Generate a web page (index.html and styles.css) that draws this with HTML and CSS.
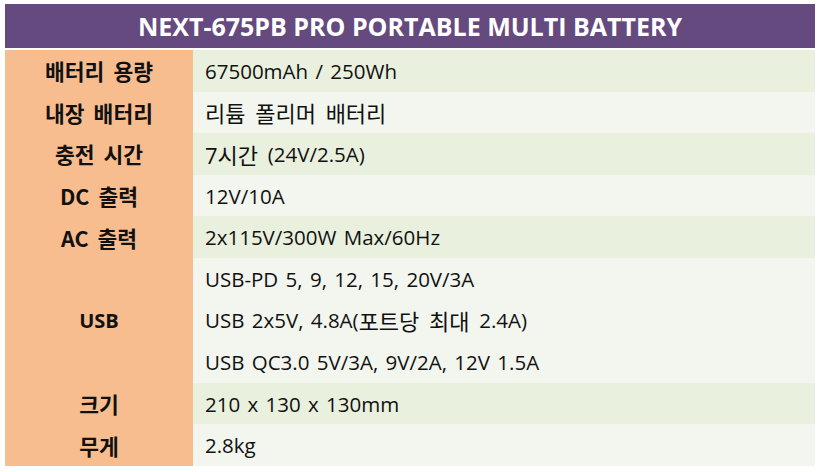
FILE: index.html
```html
<!DOCTYPE html>
<html lang="ko">
<head>
<meta charset="utf-8">
<link rel="stylesheet" href="styles.css">
</head>
<body>
<div class="sheet">
  <div class="title">NEXT-675PB PRO PORTABLE MULTI BATTERY</div>
  <div class="spec">
    <div class="label">배터리 용량</div><div class="val dark">67500mAh / 250Wh</div>
    <div class="label">내장 배터리</div><div class="val light"><span class="ko">리튬 폴리머 배터리</span></div>
    <div class="label">충전 시간</div><div class="val dark"><span class="ko">7시간 </span>(24V/2.5A)</div>
    <div class="label">DC 출력</div><div class="val light">12V/10A</div>
    <div class="label">AC 출력</div><div class="val dark">2x115V/300W Max/60Hz</div>
    <div class="label usb">USB</div>
    <div class="val light">USB-PD 5, 9, 12, 15, 20V/3A</div>
    <div class="val light">USB 2x5V, 4.8A(<span class="ko">포트당 최대 </span>2.4A)</div>
    <div class="val light">USB QC3.0 5V/3A, 9V/2A, 12V 1.5A</div>
    <div class="label">크기</div><div class="val dark">210 x 130 x 130mm</div>
    <div class="label">무게</div><div class="val light">2.8kg</div>
  </div>
</div>
</body>
</html>
```
FILE: styles.css
```css
html, body {
  margin: 0;
  padding: 0;
  background: #ffffff;
}
body {
  font-family: "Open Sans", "Noto Sans CJK KR", sans-serif;
  color: #111111;
}
.sheet {
  width: 810px;
  padding: 4px 5px 6px 5px;
  display: flex;
  flex-direction: column;
  gap: 2px;
}
.title {
  height: 44px;
  background: #654a80;
  color: #ffffff;
  font-weight: 700;
  font-size: 25px;
  display: flex;
  align-items: center;
  justify-content: center;
}
.spec {
  display: grid;
  grid-template-columns: 188px 1fr;
  grid-auto-rows: 41.6px;
}
.label {
  background: #f8bd8e;
  font-family: "Noto Sans CJK KR", sans-serif;
  font-weight: 700;
  font-size: 21.5px;
  word-spacing: 3px;
  display: flex;
  align-items: center;
  justify-content: center;
}
.label.usb {
  grid-row: span 3;
  font-family: "Open Sans", "Noto Sans CJK KR", sans-serif;
  font-size: 20px;
}
.val {
  font-size: 20.5px;
  word-spacing: 2px;
  display: flex;
  align-items: center;
  padding-left: 12px;
  white-space: pre;
}
.ko {
  font-size: 22px;
  word-spacing: 4px;
}
.dark { background: #e9f0dd; }
.light { background: #f3f6ee; }
```
